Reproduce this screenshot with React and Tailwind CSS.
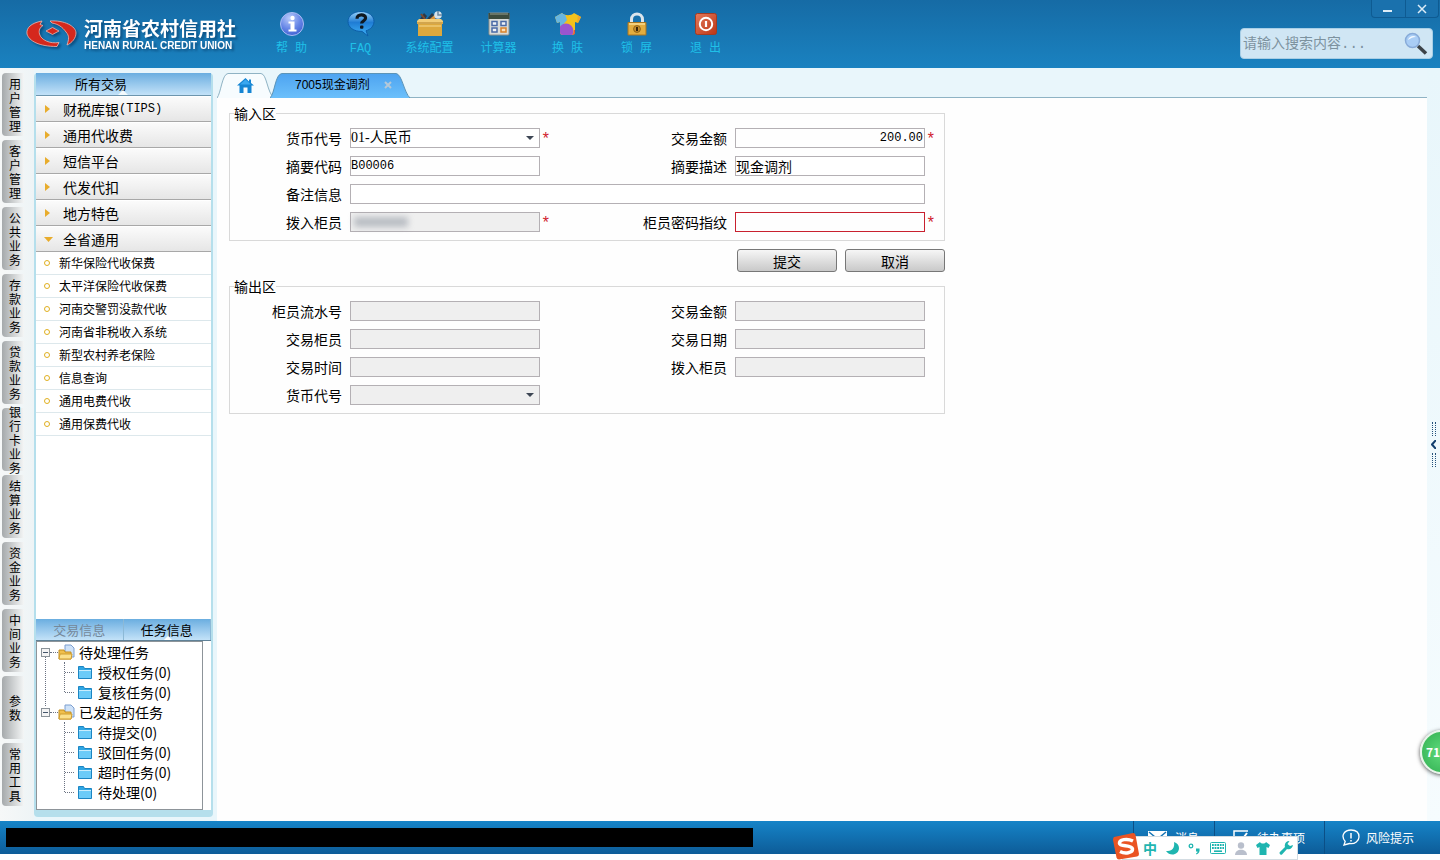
import { useState } from "react";

const MODULES = [
  "用户管理", "客户管理", "公共业务", "存款业务", "贷款业务", "银行卡业务",
  "结算业务", "资金业务", "中间业务", "参数", "常用工具",
];

const GROUPS = ["通用代收费", "短信平台", "代发代扣", "地方特色"];

const TRADES = [
  "新华保险代收保费", "太平洋保险代收保费", "河南交警罚没款代收", "河南省非税收入系统",
  "新型农村养老保险", "信息查询", "通用电费代收", "通用保费代收",
];

const TASKS = [
  { name: "待处理任务", children: ["授权任务(0)", "复核任务(0)"] },
  { name: "已发起的任务", children: ["待提交(0)", "驳回任务(0)", "超时任务(0)", "待处理(0)"] },
];

const HelpIcon = () => (
  <svg width="26" height="26" viewBox="0 0 26 26">
    <defs>
      <radialGradient id="help" cx="0.4" cy="0.25" r="0.8">
        <stop offset="0" stopColor="#b9ccfb" />
        <stop offset="0.6" stopColor="#6484e6" />
        <stop offset="1" stopColor="#3f5fd0" />
      </radialGradient>
    </defs>
    <circle cx="13" cy="13" r="11.5" fill="url(#help)" stroke="#a9bdf3" />
    <circle cx="13.5" cy="7" r="2.200" fill="#fff" />
    <path d="M9.500 10.500H15.500V18.500h2v2h-8v-2h2v-6h-2z" fill="#fff" />
  </svg>
);

const FaqIcon = () => (
  <svg width="28" height="28" viewBox="0 0 28 28">
    <defs>
      <linearGradient id="faq" x2="0" y2="1">
        <stop offset="0" stopColor="#9ad4fb" />
        <stop offset="0.45" stopColor="#1f7cd4" />
        <stop offset="1" stopColor="#3fb4f8" />
      </linearGradient>
    </defs>
    <path d="M14 1.500c7.500 0 13 4.300 13 10 0 4.500-3.500 8-8 9.300l2 5.200-6-4.600c-8.400.3-14-4.200-14-9.900C1 5.800 6.500 1.500 14 1.500z" fill="url(#faq)" stroke="#0c5da8" />
    <path d="M10 8.700c0-5 8.600-5 8.600-.7 0 3-4 3-4 5.500" fill="none" stroke="#101820" strokeWidth="3.200" />
    <rect x="13" y="15.500" width="3.400" height="3.200" rx="1" fill="#101820" />
  </svg>
);

const ConfigIcon = () => (
  <svg width="28" height="28" viewBox="0 0 28 28">
    <path d="M4 9l4-6 3 3-3 5zM11 9l5-6 2 2-4 5z" fill="#2b3a48" />
    <path d="M5 4l4 5" stroke="#7b4a2e" strokeWidth="2" />
    <path d="M15 10l6-5" stroke="#d8923a" strokeWidth="3" />
    <circle cx="22" cy="5" r="3.800" fill="#d7e3ec" />
    <path d="M22 1v4h4" stroke="#6c8aa3" fill="none" strokeWidth="1.500" />
    <path d="M1 11l2-2h22l2 2v3H1z" fill="#f2cc76" />
    <path d="M2 14h24v12H2z" fill="#dda83d" />
    <path d="M1 13h26" stroke="#b27f25" />
    <path d="M3 16h22" stroke="#f6da91" />
  </svg>
);

const CalcIcon = () => (
  <svg width="26" height="26" viewBox="0 0 26 26">
    <rect x="3" y="2" width="20" height="22" rx="1" fill="#d9dcda" stroke="#8b8f8c" />
    <rect x="2.500" y="2" width="21" height="6" fill="#3c4b3d" />
    <path d="M4 3h18" stroke="#97a08f" />
    <g fill="#eef2f8" stroke="#4a6aa6" strokeWidth="1.500">
      <rect x="6" y="10.500" width="5" height="4" />
      <rect x="15" y="10.500" width="5" height="4" />
      <rect x="6" y="17" width="5" height="4" />
      <rect x="15" y="17" width="5" height="4" stroke="#d9822b" fill="#fbe0bb" />
    </g>
  </svg>
);

const SkinIcon = () => (
  <svg width="28" height="26" viewBox="0 0 28 26">
    <defs>
      <clipPath id="shirt">
        <path d="M1 6l7-4c3 3 9 3 12 0l7 4-3 6-3-1v10q0 3-3 3h-9q-3 0-3-3V11l-3 1z" />
      </clipPath>
    </defs>
    <g clipPath="url(#shirt)">
      <rect width="28" height="26" fill="#f3c21c" />
      <path d="M0 0h10l3 9-5 6-8 0z" fill="#68b6e0" />
      <path d="M24 3l5 2v9h-6z" fill="#f0a62a" />
      <circle cx="12" cy="20" r="7.500" fill="#9a55cf" />
      <path d="M17 25c2-1 3-3 3-6h3v7z" fill="#e9503c" />
    </g>
  </svg>
);

const LockIcon = () => (
  <svg width="22" height="26" viewBox="0 0 22 26">
    <path d="M5.500 13V8.500c0-7.500 11-7.500 11 0V13" fill="none" stroke="#dbe5ec" strokeWidth="3" />
    <path d="M2 11.500h18V24H2z" fill="#e3ad3f" stroke="#a87520" />
    <path d="M3 13h16" stroke="#f9dd93" strokeWidth="1.500" />
    <circle cx="11" cy="18" r="3.400" fill="#c58f2c" stroke="#8f6216" />
    <path d="M11 16v4" stroke="#3a2508" strokeWidth="2" />
  </svg>
);

const ExitIcon = () => (
  <svg width="24" height="26" viewBox="0 0 24 26">
    <defs>
      <linearGradient id="exit" x2="1" y2="1">
        <stop offset="0" stopColor="#e57a5a" />
        <stop offset="1" stopColor="#bb3516" />
      </linearGradient>
    </defs>
    <rect x="1.500" y="2.500" width="21" height="21" rx="2" fill="url(#exit)" stroke="#a43b22" />
    <circle cx="12" cy="13" r="6.200" fill="none" stroke="#fff" strokeWidth="2" />
    <path d="M12 10v6" stroke="#fff" strokeWidth="2.200" />
  </svg>
);

const TOOLS = [
  { label: "帮 助", icon: HelpIcon },
  { label: "FAQ", icon: FaqIcon },
  { label: "系统配置", icon: ConfigIcon },
  { label: "计算器", icon: CalcIcon },
  { label: "换 肤", icon: SkinIcon },
  { label: "锁 屏", icon: LockIcon },
  { label: "退 出", icon: ExitIcon },
];

function Logo() {
  return (
    <div className="flex w-[257px] shrink-0 items-center gap-[7px] pl-[26px] drop-shadow-[2px_2px_1px_rgba(0,40,80,0.5)]">
      <svg width="51" height="30" viewBox="0 0 51 30" className="shrink-0">
        <g fill="#d5281d" stroke="#f0b7ae" strokeWidth="0.800">
          <path d="M16 2C5 4 0 9 1 15c2 7 12 12.500 30 12.500l2-4c-9 1.500-18-2.500-19.500-8.500C12.500 11 14 8.500 17 6.500l-3-1z" />
          <path d="M24 2c14-1 26 5 26 12 0 5-4 10-9 12 2-6 2.500-9-1-13-3.500-5-8-8-14-9z" />
          <path d="M20 12l6.500-3.500L33 12l-6.500 3.500z" />
        </g>
      </svg>
      <div className="whitespace-nowrap font-bold text-white">
        <div className="text-[19px] leading-6">河南省农村信用社</div>
        <div className="font-['Liberation_Sans'] text-[10px] leading-3">HENAN RURAL CREDIT UNION</div>
      </div>
    </div>
  );
}

function Header() {
  return (
    <header className="relative flex h-[68px] shrink-0 bg-linear-to-b from-[#166ba5] to-[#1a82c0]">
      <Logo />
      <nav className="flex pt-[10px]">
        {TOOLS.map(({ label, icon: Icon }) => (
          <button
            key={label}
            className="flex w-[69px] flex-col items-center gap-1 font-['Liberation_Mono','Noto_Sans_CJK_SC',monospace] text-xs text-[#1fc0e8]"
          >
            <span className="flex h-[27px] items-center"><Icon /></span>
            {label}
          </button>
        ))}
      </nav>
      <div className="ml-auto flex flex-col items-end">
        <div className="mr-px flex h-[18px] w-[68px] divide-x divide-[#0e5b92] rounded-b border border-t-0 border-[#0e5b92] bg-[#1a71ad] text-white">
          <button aria-label="最小化" className="flex flex-1 items-center justify-center">
            <svg width="10" height="10"><path d="M0 7h9" stroke="#dcecf7" strokeWidth="2" /></svg>
          </button>
          <button aria-label="关闭" className="flex flex-1 items-center justify-center">
            <svg width="10" height="10"><path d="M1 1l8 8M9 1l-8 8" stroke="#dcecf7" strokeWidth="1.500" /></svg>
          </button>
        </div>
        <div className="mt-[10px] mr-[7px] flex h-[31px] w-[193px] items-center rounded border border-[#a9cfe6] bg-[#d0e6f4] pr-1 pl-[2px]">
          <input
            aria-label="搜索"
            placeholder="请输入搜索内容..."
            className="min-w-0 flex-1 bg-transparent font-['Liberation_Mono','Noto_Sans_CJK_SC',monospace] text-sm outline-none placeholder:text-[#7d929f]"
          />
          <svg width="24" height="24" viewBox="0 0 24 24" className="shrink-0">
            <path d="M14 14l8 7.500" stroke="#3c4348" strokeWidth="3.500" />
            <circle cx="8.500" cy="8.500" r="7" fill="#a9cdf5" stroke="#88abd8" strokeWidth="1.500" />
            <path d="M4 8c1-4 6-5 8-3-3 0-5 1-8 3z" fill="#f3f9ff" />
          </svg>
        </div>
      </div>
    </header>
  );
}

function ModuleRail() {
  return (
    <nav className="flex w-[34px] shrink-0 flex-col gap-1 bg-linear-to-r from-[#f6f8f8] to-[#eef4f6] pt-[5px] pl-[2px]">
      {MODULES.map((m) => (
        <button
          key={m}
          className="flex h-[63px] w-[22px] items-center rounded-l-sm bg-linear-to-r from-[#a5a9ab] via-[#cdd0d1] to-[#f4f6f6] pl-[7px]"
        >
          <span className="w-3 text-xs leading-[14px] break-all">{m}</span>
        </button>
      ))}
    </nav>
  );
}

const FolderOpen = () => (
  <svg width="17" height="17" viewBox="0 0 17 17" className="shrink-0">
    <path d="M7 1h6l3 3v9H7z" fill="#cfe2f8" stroke="#7d9fd0" />
    <path d="M1 6h5l1 2h6v7H1z" fill="#f0bf4c" stroke="#c38f22" />
    <path d="M2 10h12l-1 5H1z" fill="#fbe08c" stroke="#cf9c2f" />
  </svg>
);

const Folder = () => (
  <svg width="14" height="13" viewBox="0 0 14 13" className="shrink-0">
    <path d="M.5.500h5l1 2h7v10H.500z" fill="#2fa6e4" stroke="#1c85c2" />
    <path d="M1 5h12v7H1z" fill="#6ccbf8" />
    <path d="M1 4.500h12" stroke="#c9edfd" />
  </svg>
);

function GroupRow({ open, children }) {
  return (
    <button className="flex h-[26px] w-full items-center border-t border-b border-t-white border-b-[#a8a8a8] bg-linear-to-b from-[#fbfbfb] to-[#e6e6e6] pl-2 text-sm">
      <svg width="10" height="10" className="mr-[9px] shrink-0">
        {open ? <path d="M0 3h9l-4.500 5z" fill="#e8ac2c" /> : <path d="M1 1l5 4-5 4z" fill="#e8ac2c" />}
      </svg>
      {children}
    </button>
  );
}

function TaskTree() {
  return (
    <div className="mr-2 h-[169px] border border-[#8d9499] bg-white text-sm">
      {TASKS.map((t, i) => (
        <div key={t.name} className="relative">
          {i === 0 && <span className="absolute top-[15px] -bottom-1 left-2 border-l border-dotted border-gray-500" />}
          <div className="flex h-5 items-center pl-1">
            <button aria-label={`收起${t.name}`} className="size-[9px] shrink-0 border border-[#8a9298] bg-[#f4f4f4]">
              <span className="mx-auto block h-px w-[5px] bg-[#44566b]" />
            </button>
            <span className="w-2 border-t border-dotted border-gray-500" />
            <FolderOpen />
            <span className="ml-1">{t.name}</span>
          </div>
          <ul className="relative">
            <li aria-hidden="true" className="absolute top-0 bottom-[10px] left-[27px] border-l border-dotted border-gray-500" />
            {t.children.map((c) => (
              <li key={c} className="flex h-5 items-center pl-7">
                <span className="mr-1 w-[9px] border-t border-dotted border-gray-500" />
                <Folder />
                <span className="ml-[6px]">{c}</span>
              </li>
            ))}
          </ul>
        </div>
      ))}
    </div>
  );
}

function Sidebar() {
  return (
    <aside className="mt-[5px] mb-1 flex w-[179px] shrink-0 flex-col rounded border-x-2 border-b-[7px] border-[#b5dfec] bg-white">
      <div className="relative flex h-[23px] shrink-0 items-center border-b border-[#6d95ad] bg-linear-to-b from-[#6aaee0] to-[#c3e2f8] pl-[39px] text-[13px]">
        所有交易
        <svg width="10" height="5" className="absolute bottom-0 left-[82px]"><path d="M0 5l5-5 5 5z" fill="#f4fafd" /></svg>
      </div>
      <div>
        <GroupRow>
          财税库银<span className="font-['Liberation_Mono'] text-xs">(TIPS)</span>
        </GroupRow>
        {GROUPS.map((g) => <GroupRow key={g}>{g}</GroupRow>)}
        <GroupRow open>全省通用</GroupRow>
      </div>
      <ul className="flex-1 text-xs">
        {TRADES.map((t) => (
          <li key={t} className="border-b border-[#dde8ec]">
            <a href="#" className="flex h-[22px] items-center pl-2">
              <span className="mr-[9px] size-[6px] rounded-full border border-[#e0b020]" />
              {t}
            </a>
          </li>
        ))}
      </ul>
      <div className="relative grid h-[22px] shrink-0 grid-cols-2 divide-x divide-[#8cb9d6] border-b border-[#5f8197] bg-linear-to-b from-[#6aaee0] to-[#c3e2f8] text-[13px]">
        <button className="text-[#75889a]">交易信息</button>
        <button>任务信息</button>
        <svg width="8" height="4" className="absolute bottom-0 left-[128px]"><path d="M0 4l4-4 4 4z" fill="#fff" /></svg>
      </div>
      <TaskTree />
    </aside>
  );
}

function TabBar() {
  return (
    <div className="flex h-[30px] items-end border-b border-[#8fb3c4]">
      <button aria-label="首页" className="relative flex h-6 w-[58px] items-center justify-center">
        <svg width="58" height="25" className="absolute top-0 left-0">
          <path d="M0 25C4 20 5 1 11 .500h33c6 .5 6 19 13 24.500" fill="#f7fcfe" stroke="#8fb3c4" />
        </svg>
        <svg width="17" height="15" viewBox="0 0 17 15" className="relative -left-px">
          <path d="M8.500 0L0 7.500h2.500V15h4V9.500h4V15h4V7.500H17L14 5V1.500h-2v2z" fill="#1585d3" />
          <path d="M8.500 1.500L3 6.500h11z" fill="#3aa8f0" />
        </svg>
      </button>
      <div className="relative -ml-[5px] flex h-6 w-[140px] items-center pl-[25px] font-['Liberation_Sans','Noto_Sans_CJK_SC',sans-serif] text-xs">
        <svg width="140" height="25" className="absolute top-0 left-0">
          <defs>
            <linearGradient id="tab" x2="0" y2="1">
              <stop offset="0" stopColor="#4da3f0" />
              <stop offset="1" stopColor="#6cc0fb" />
            </linearGradient>
          </defs>
          <path d="M0 25C5 20 5 1 12 .500h114c6 .5 8 19 14 24.500" fill="url(#tab)" stroke="#5b94b8" />
        </svg>
        <button className="relative">7005现金调剂</button>
        <button aria-label="关闭标签" className="relative ml-[14px]">
          <svg width="8" height="8"><path d="M1 1l6 6M7 1l-6 6" stroke="#b5c8d8" strokeWidth="2" /></svg>
        </button>
      </div>
    </div>
  );
}

const INPUT = "h-5 w-full border border-[#b4b0b4] bg-white text-sm outline-none disabled:bg-[#efefef]";

function Label({ id, children }) {
  return <label htmlFor={id} className="pr-2 text-right text-sm leading-5">{children}</label>;
}

function Star({ show }) {
  return <span className="pl-px font-['Liberation_Mono'] text-base leading-6 text-[#d0202c]">{show ? "*" : ""}</span>;
}

function Select({ id, disabled, children }) {
  return (
    <div className="relative h-5">
      <select id={id} disabled={disabled} className={`${INPUT} block appearance-none font-['Liberation_Serif','Noto_Sans_CJK_SC',serif] leading-[18px]`}>
        {children}
      </select>
      <svg width="8" height="5" className="pointer-events-none absolute top-2 right-[6px]"><path d="M0 0h8L4 4z" fill="#3d4654" /></svg>
    </div>
  );
}

function Panel({ title, children }) {
  return (
    <fieldset className="border border-[#d9d9d9]">
      <legend className="ml-1 h-[14px] text-sm leading-[14px]">{title}</legend>
      <div className="grid auto-rows-[20px] grid-cols-[120px_190px_12px_183px_190px_1fr] gap-y-2 py-2">{children}</div>
    </fieldset>
  );
}

function OutputField({ id, label }) {
  return (
    <>
      <Label id={id}>{label}</Label>
      <input id={id} disabled className={INPUT} />
      <span />
    </>
  );
}

function TransferForm() {
  const [amount, setAmount] = useState("200.00");
  const [code, setCode] = useState("B00006");
  const [desc, setDesc] = useState("现金调剂");

  return (
    <form className="w-[716px]" onSubmit={(e) => e.preventDefault()}>
      <Panel title="输入区">
        <Label id="currency">货币代号</Label>
        <Select id="currency"><option>01-人民币</option></Select>
        <Star show />
        <Label id="amount">交易金额</Label>
        <input id="amount" value={amount} onChange={(e) => setAmount(e.target.value)} className="h-5 border border-[#b4b0b4] pr-px text-right font-['Liberation_Mono'] text-xs" />
        <Star show />

        <Label id="code">摘要代码</Label>
        <input id="code" value={code} onChange={(e) => setCode(e.target.value)} className="h-5 border border-[#b4b0b4] font-['Liberation_Mono'] text-xs" />
        <Star />
        <Label id="desc">摘要描述</Label>
        <input id="desc" value={desc} onChange={(e) => setDesc(e.target.value)} className={INPUT} />
        <Star />

        <Label id="remark">备注信息</Label>
        <div className="col-span-4"><input id="remark" className={`${INPUT} block`} /></div>
        <Star />

        <Label id="teller">拨入柜员</Label>
        <div className="relative">
          <input id="teller" disabled className={`${INPUT} block`} />
          <span className="absolute top-[5px] left-1 h-[10px] w-[54px] bg-gray-500/40 blur-[3px]" />
        </div>
        <Star show />
        <Label id="finger">柜员密码指纹</Label>
        <input id="finger" type="password" className="h-5 border border-[#c8202e] text-sm outline-none" />
        <Star show />
      </Panel>

      <div className="mt-2 mb-[7px] flex justify-end gap-2">
        <button className="h-[23px] w-[100px] rounded-[3px] border border-[#777] bg-linear-to-b from-[#f6f6f6] to-[#c9c9c9] text-sm">提交</button>
        <button type="button" className="h-[23px] w-[100px] rounded-[3px] border border-[#777] bg-linear-to-b from-[#f6f6f6] to-[#c9c9c9] text-sm">取消</button>
      </div>

      <Panel title="输出区">
        <OutputField id="out-serial" label="柜员流水号" />
        <OutputField id="out-amount" label="交易金额" />
        <OutputField id="out-teller" label="交易柜员" />
        <OutputField id="out-date" label="交易日期" />
        <OutputField id="out-time" label="交易时间" />
        <OutputField id="out-target" label="拨入柜员" />
        <Label id="out-currency">货币代号</Label>
        <Select id="out-currency" disabled />
      </Panel>
    </form>
  );
}

function CollapseHandle() {
  return (
    <div className="flex w-[13px] shrink-0 flex-col items-end bg-linear-to-b from-[#e8f6fb] to-[#f6fcfe] pt-[354px]">
      <button aria-label="展开侧栏" className="flex flex-col items-center gap-1 pr-[4px]">
        <span className="h-[14px] w-1 border-x border-dotted border-[#24507a]" />
        <svg width="5" height="9"><path d="M5 0L1 4.500 5 9" fill="none" stroke="#123f6e" strokeWidth="2" /></svg>
        <span className="h-[14px] w-1 border-x border-dotted border-[#24507a]" />
      </button>
    </div>
  );
}

function ImeBar() {
  return (
    <div className="absolute right-[142px] -bottom-[6px] flex h-[24px] items-center gap-[9px] border border-[#d3dce2] bg-white pr-1 pl-[20px] text-[#1fb5b0]">
      <svg width="28" height="28" viewBox="0 0 28 28" className="absolute -bottom-px -left-[11px]">
        <path d="M2 5L21 1q2 0 2.500 2L27 22q0 2-2 2.500L7 27.500q-2 0-2.500-2L1 8q0-2 1-3z" fill="#ea5423" />
        <path d="M21 9C15 6 7 7.500 7.500 11.500 8 15 20 12.500 20.500 17c.3 4-7.500 5-12.500 2.500" fill="none" stroke="#fff" strokeWidth="3.500" />
      </svg>
      <span className="text-sm font-bold leading-5">中</span>
      <svg width="13" height="13" viewBox="0 0 13 13"><path d="M8 0c1 6-2 9-8 9 4 6 13 4 13-3 0-3-2-5-5-6z" fill="currentColor" /></svg>
      <svg width="13" height="13" viewBox="0 0 13 13">
        <circle cx="3" cy="4" r="1.800" fill="none" stroke="currentColor" strokeWidth="1.300" />
        <path d="M8 6.500h3.500c.5 3-.5 5-3 6l-.5-1c1-.5 1.500-1 1.500-2H8z" fill="currentColor" />
      </svg>
      <svg width="16" height="12" viewBox="0 0 16 12">
        <rect x="0.500" y="0.500" width="15" height="11" rx="1" fill="#fff" stroke="currentColor" />
        <path d="M2 3h12M2 6h12" stroke="currentColor" strokeWidth="1.800" strokeDasharray="1.800 0.800" />
        <path d="M4 9.200h8" stroke="currentColor" strokeWidth="1.600" />
      </svg>
      <svg width="12" height="13" viewBox="0 0 12 13" className="text-[#b9bfcc]">
        <circle cx="6" cy="3.500" r="3.200" fill="currentColor" />
        <path d="M0 13c0-7 12-7 12 0z" fill="currentColor" />
      </svg>
      <svg width="14" height="13" viewBox="0 0 14 13"><path d="M4 0c1 2 5 2 6 0l4 3-1.500 3-2-1v8h-7V5l-2 1L0 3z" fill="currentColor" /></svg>
      <svg width="14" height="14" viewBox="0 0 14 14"><path d="M14 4c-.5 3-3 5-6 4l-5 5.500c-1 .8-3-.8-2.300-2.200L6 6C5 3 7 0 10.500 0L8.500 3l2.500 2z" fill="currentColor" /></svg>
    </div>
  );
}

function Footer() {
  return (
    <footer className="relative mb-[6px] flex h-[33px] shrink-0 items-stretch bg-linear-to-b from-[#1684c8] to-[#0d5c98] text-xs text-white">
      <div className="my-[7px] ml-[6px] w-[747px] bg-black" />
      <div className="ml-auto flex divide-x divide-[#0b4f86] border-l border-[#0b4f86]">
        <button className="flex w-[81px] items-center gap-2 pl-[14px]">
          <svg width="19" height="14"><path d="M0 0h19v14H0z" fill="#fff" /><path d="M1 1l8.500 7L18 1" fill="none" stroke="#1675b5" strokeWidth="1.500" /></svg>
          消息
        </button>
        <button className="flex w-[110px] items-center gap-2 pl-[18px]">
          <svg width="16" height="16" fill="none" stroke="#fff"><path d="M15 8v7H1V1h14" strokeWidth="1.500" /><path d="M4 7l4 4 6-8" strokeWidth="2" /></svg>
          待办事项
        </button>
        <button className="flex w-[115px] items-center gap-[6px] pl-[17px]">
          <svg width="18" height="17" viewBox="0 0 18 17" fill="none" stroke="#fff">
            <path d="M2 16l1.200-3.500C-2 6 3 1 9 1s8 3.500 8 7-4 7.500-9.500 6.500z" strokeWidth="1.300" />
            <path d="M9 4v5.500M9 11v1.500" strokeWidth="1.500" />
          </svg>
          风险提示
        </button>
      </div>
      <ImeBar />
    </footer>
  );
}

export default function App() {
  return (
    <div className="relative flex h-screen flex-col overflow-hidden bg-white font-['Noto_Sans_CJK_SC',sans-serif] text-black">
      <Header />
      <div className="flex min-h-0 flex-1 bg-[#e9f6fb]">
        <ModuleRail />
        <Sidebar />
        <main className="ml-1 flex min-w-0 flex-1 flex-col">
          <TabBar />
          <div className="flex-1 bg-[#fefefe] pt-2 pl-3">
            <TransferForm />
          </div>
        </main>
        <CollapseHandle />
      </div>
      <Footer />
      <div className="absolute -right-6 bottom-[86px] flex size-[44px] items-center rounded-full border-2 border-[#e8f5ea] bg-radial from-[#5fdc7c] to-[#2fae50] pl-1 text-xs font-bold text-white shadow-[0_1px_4px_rgba(0,0,0,0.7)]">
        71
      </div>
    </div>
  );
}
